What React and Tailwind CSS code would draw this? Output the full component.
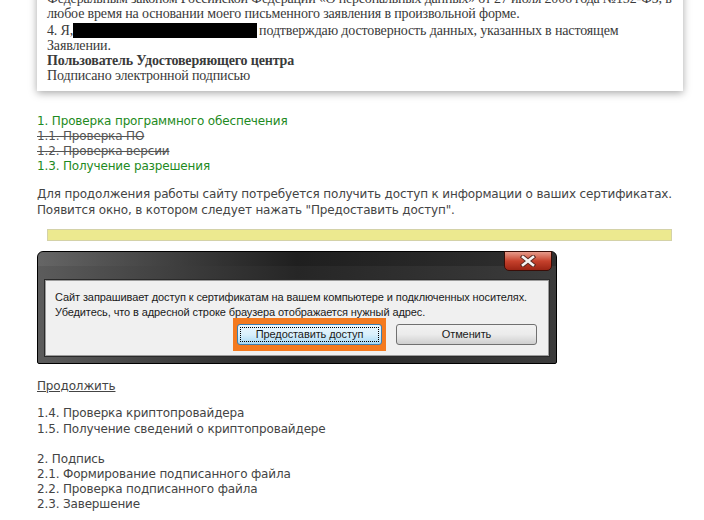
import React from 'react';

const sans = { fontFamily: '"DejaVu Sans", Verdana, sans-serif' };

function CloseGlyph() {
  return (
    <svg width="18" height="12" viewBox="0 0 18 12">
      <path d="M4 2 L14 10 M14 2 L4 10" stroke="#5a2a22" strokeWidth="4.5" strokeLinecap="square" />
      <path d="M4 2 L14 10 M14 2 L4 10" stroke="#f4f4f4" strokeWidth="2.6" strokeLinecap="square" />
    </svg>
  );
}

function StatementCard() {
  return (
    <div className="ml-[37px] mr-[21px] -mt-[12px] bg-white px-[10px] pt-[3px] pb-[8px] shadow-[0_2px_8px_rgba(0,0,0,0.35)] text-[14px] leading-[15px] text-[#3a3a3a] whitespace-nowrap overflow-hidden"
      style={{ fontFamily: '"Liberation Serif", "Times New Roman", serif' }}>
      <div className="mb-[2px]">
        <div className="tracking-[-0.2px]">Федеральным законом Российской Федерации «О персональных данных» от 27 июля 2006 года №152-ФЗ, в</div>
        <div>любое время на основании моего письменного заявления в произвольной форме.</div>
      </div>
      <div className="flex items-start">
        <span>4. Я,</span>
        <span className="inline-block w-[184px] h-[15px] bg-black" />
        <span className="ml-[2px]">подтверждаю достоверность данных, указанных в настоящем</span>
      </div>
      <div>Заявлении.</div>
      <div className="font-bold">Пользователь Удостоверяющего центра</div>
      <div>Подписано электронной подписью</div>
    </div>
  );
}

function AccessDialog() {
  return (
    <div className="relative ml-[37px] w-[520px] h-[113px] border border-black rounded-t-[6px] rounded-b-[2px] bg-gradient-to-r from-[#5c5c5c] via-[#262626] to-[#3c3c3c] px-[6px] pt-[27px] pb-[6px]">
      <div className="absolute inset-x-0 top-0 h-[14px] rounded-t-[6px] bg-gradient-to-r from-[#6a6a6a] via-[#1c1c1c] to-[#2a2a2a] opacity-70" />
      <div className="absolute top-[-1px] right-[4px] w-[48px] h-[20px] rounded-b-[5px] border border-[#3a0e08] bg-gradient-to-b from-[#e59a8a] via-[#c6412c] to-[#9c2414] flex items-center justify-center">
        <CloseGlyph />
      </div>
      <div className="relative h-full border border-[#2a2a2a] bg-[#f0f0f0] shadow-[inset_0_0_0_1px_#9c9c9c] pl-[10px] pr-[12px] pt-[10px] text-[11px] leading-[15px] text-[#1a1a1a] tracking-[-0.1px]"
        style={{ fontFamily: '"Liberation Sans", Arial, sans-serif' }}>
        <div className="whitespace-nowrap">Сайт запрашивает доступ к сертификатам на вашем компьютере и подключенных носителях.</div>
        <div className="whitespace-nowrap">Убедитесь, что в адресной строке браузера отображается нужный адрес.</div>
        <div className="-mt-[2px] flex items-center justify-end gap-[10px]">
          <div className="bg-[#f47a1f] px-[4px] py-[6px]">
            <div className="w-[145px] h-[21px] rounded-[3px] border border-[#3c7fb1] bg-gradient-to-b from-[#eaf6fd] via-[#d9f0fc] to-[#a7d9f5] p-[2px]">
              <div className="h-full border border-dotted border-black flex items-center justify-center">Предоставить доступ</div>
            </div>
          </div>
          <div className="w-[141px] h-[21px] rounded-[3px] border border-[#707070] bg-gradient-to-b from-[#f2f2f2] via-[#ebebeb] to-[#cfcfcf] flex items-center justify-center">Отменить</div>
        </div>
      </div>
    </div>
  );
}

export default function App() {
  return (
    <div className="w-[704px] h-[520px] overflow-hidden bg-white text-[12px] text-[#444] tracking-[-0.15px]" style={sans}>
      <StatementCard />

      <div className="mt-[23px] ml-[37px] leading-[15px]">
        <div className="text-[#1e8a22]">1. Проверка программного обеспечения</div>
        <div className="line-through text-[#555]">1.1. Проверка ПО</div>
        <div className="line-through text-[#555]">1.2. Проверка версии</div>
        <div className="text-[#1e8a22]">1.3. Получение разрешения</div>
      </div>

      <div className="mt-[12px] ml-[37px] leading-[16px]">
        <div>Для продолжения работы сайту потребуется получить доступ к информации о ваших сертификатах.</div>
        <div>Появится окно, в котором следует нажать "Предоставить доступ".</div>
      </div>

      <div className="mt-[11px] mx-[32px] ml-[47px] h-[12px] bg-[#ece98f] border border-[#d4d2a8]" />

      <div className="mt-[10px]">
        <AccessDialog />
      </div>

      <div className="mt-[14px] ml-[37px] leading-[16px]">
        <span className="underline">Продолжить</span>
      </div>

      <div className="mt-[11px] ml-[37px] leading-[16px]">
        <div>1.4. Проверка криптопровайдера</div>
        <div>1.5. Получение сведений о криптопровайдере</div>
      </div>

      <div className="mt-[15px] ml-[37px] leading-[15px]">
        <div>2. Подпись</div>
        <div>2.1. Формирование подписанного файла</div>
        <div>2.2. Проверка подписанного файла</div>
        <div>2.3. Завершение</div>
      </div>
    </div>
  );
}
